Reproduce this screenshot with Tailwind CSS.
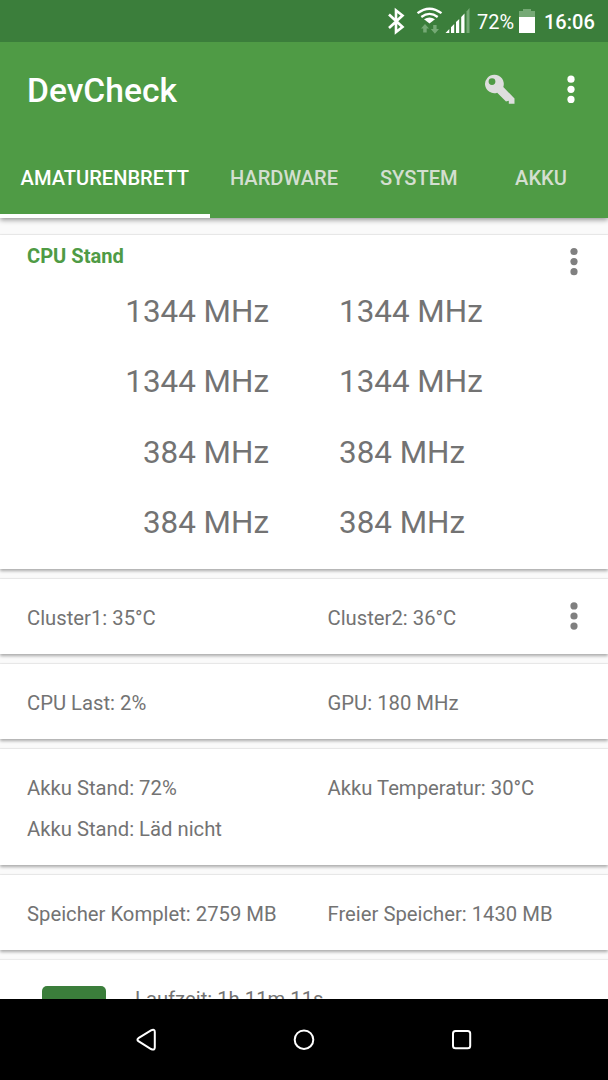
<!DOCTYPE html>
<html lang="de">
<head>
<meta charset="utf-8">
<title>DevCheck</title>
<script src="https://cdn.jsdelivr.net/npm/@tailwindcss/browser@4"></script>
</head>
<body class="w-[608px] h-[1080px] overflow-hidden flex flex-col bg-[#fafafa] font-['Roboto',sans-serif] text-[#737373]">
<header class="relative z-10 shrink-0 bg-[#4f9b45] text-white shadow-[0_2px_5px_rgba(0,0,0,0.4)]">
  <div class="h-[42px] bg-[#3b7e3b] flex items-center relative">
    <svg class="w-[150px] h-[42px] ml-[386px]" viewBox="386 0 150 42">
      <path d="M389 14.500L402.500 27L396 32V10.500L402.500 15.500L389 28" fill="none" stroke="#fff" stroke-width="2.600"/>
      <path d="M417.500 13.200Q429.500 4.200 441.500 13.200M421.300 17Q429.500 10.800 437.700 17" fill="none" stroke="#fff" stroke-width="2.300"/>
      <path d="M424 19.300Q429.500 15.800 435 19.300L429.500 23.500Z" fill="#fff"/>
      <path d="M425 24L429 28.500H426.700V32.500H423.200V28.500H421ZM433.200 25H436.600V29H439L434.900 33.800L430.800 29H433.200Z" fill="#75a975"/>
      <path d="M445.500 33L449.300 29V33ZM451 27.300L454.200 24V33H451ZM456 22L459.200 19V33H456ZM461.200 17L464.500 13.500V33H461.200Z" fill="#fff"/>
      <path d="M466.500 11.500L469.500 8V33H466.500Z" fill="#75a975"/>
      <path d="M519 11H523V9H531V11H535V17H519Z" fill="#75a975"/><path d="M519 17H535V33H519Z" fill="#fff"/>
      <text x="477" y="29.200" font-size="20.300" textLength="37" lengthAdjust="spacingAndGlyphs" fill="#fff">72%</text>
    </svg>
    <span class="ml-[8px] mt-[2px] text-[20px] leading-6 font-medium">16:06</span>
  </div>
  <div class="h-[96px] flex items-center pl-[27px] pr-[20px]">
    <h1 class="flex-1 pt-[2px] text-[33.600px] leading-[40px] font-medium">DevCheck</h1>
    <svg class="w-[32px] h-[32px] mt-[-2px] mr-[48px]" viewBox="484 73 32 32"><path fill-rule="evenodd" d="M494.500 74.800A9.200 9.200 0 1 0 497.200 92.700L506 101.500L508.800 100.700V103.700H514.500V98.500L503.300 87A9.200 9.200 0 0 0 494.500 74.800ZM492 78.200A3.400 3.400 0 1 1 492 85A3.400 3.400 0 0 1 492 78.200Z" fill="#dedede"/></svg>
    <svg class="w-[14px] h-[32px] mt-[-2px] mr-[10px]" viewBox="564 73 14 32" fill="#fff"><circle cx="571" cy="79.200" r="3.600"/><circle cx="571" cy="89.300" r="3.600"/><circle cx="571" cy="99.400" r="3.600"/></svg>
  </div>
  <nav class="h-[80px] grid grid-cols-[209.500px_149px_120.500px_124px] text-center text-[20.100px] leading-[81px] font-medium text-[#d3dfd0]">
    <div class="h-[80px] text-white shadow-[inset_0_-4px_0_#fff]">AMATURENBRETT</div>
    <div>HARDWARE</div><div>SYSTEM</div><div>AKKU</div>
  </nav>
</header>
<main class="flex-1 min-h-0 overflow-hidden pt-[17px] flex flex-col gap-[10px] text-[20.250px] leading-[24px]">
  <section class="h-[334px] shrink-0 bg-white shadow-[0_2px_3px_rgba(0,0,0,0.32),0_-1px_1px_rgba(0,0,0,0.06)]">
    <div class="flex justify-between pl-[27px] pr-[27px] pt-[10px]">
      <h2 class="mt-[-1px] font-bold text-[#4f9b45] text-[20.100px]">CPU Stand</h2>
      <svg class="w-[14px] h-[32px] mt-px" viewBox="0 0 14 32" fill="#808080"><circle cx="7" cy="5.500" r="3.600"/><circle cx="7" cy="15.600" r="3.600"/><circle cx="7" cy="25.700" r="3.600"/></svg>
    </div>
    <div class="mt-[-1px] grid grid-cols-[269px_1fr] gap-x-[70px] auto-rows-[70.400px] text-[31.400px] leading-[70px]">
      <div class="text-right">1344 MHz</div><div>1344 MHz</div>
      <div class="text-right">1344 MHz</div><div>1344 MHz</div>
      <div class="text-right">384 MHz</div><div>384 MHz</div>
      <div class="text-right">384 MHz</div><div>384 MHz</div>
    </div>
  </section>
  <section class="h-[75px] shrink-0 bg-white shadow-[0_2px_3px_rgba(0,0,0,0.32),0_-1px_1px_rgba(0,0,0,0.06)] flex items-center pl-[27px] pr-[27px] pt-[3px]">
    <span class="w-[300.500px]">Cluster1: 35°C</span><span class="flex-1">Cluster2: 36°C</span>
    <svg class="w-[14px] h-[32px] mt-[-4px]" viewBox="0 0 14 32" fill="#808080"><circle cx="7" cy="5.900" r="3.600"/><circle cx="7" cy="16" r="3.600"/><circle cx="7" cy="26.100" r="3.600"/></svg>
  </section>
  <section class="h-[75px] shrink-0 bg-white shadow-[0_2px_3px_rgba(0,0,0,0.32),0_-1px_1px_rgba(0,0,0,0.06)] flex items-center pl-[27px] pt-[3px]">
    <span class="w-[300.500px]">CPU Last: 2%</span><span>GPU: 180 MHz</span>
  </section>
  <section class="h-[116px] shrink-0 bg-white shadow-[0_2px_3px_rgba(0,0,0,0.32),0_-1px_1px_rgba(0,0,0,0.06)] grid grid-cols-[300.500px_1fr] auto-rows-[24px] gap-y-[17px] pl-[27px] pt-[27px]">
    <span>Akku Stand: 72%</span><span>Akku Temperatur: 30°C</span>
    <span>Akku Stand: Läd nicht</span>
  </section>
  <section class="h-[75px] shrink-0 bg-white shadow-[0_2px_3px_rgba(0,0,0,0.32),0_-1px_1px_rgba(0,0,0,0.06)] flex items-center pl-[27px] pt-[3px]">
    <span class="w-[300.500px]">Speicher Komplet: 2759 MB</span><span>Freier Speicher: 1430 MB</span>
  </section>
  <section class="h-[100px] shrink-0 bg-white shadow-[0_-1px_1px_rgba(0,0,0,0.06)] flex items-start pl-[42px] pt-[26px]">
    <div class="w-[64px] h-[60px] rounded-[5px] bg-[#3b7e3b]"></div><span class="ml-[29px] mt-px">Laufzeit: 1h 11m 11s</span>
  </section>
</main>
<footer class="relative z-10 h-[81px] shrink-0 bg-black flex items-center justify-center gap-[126px]">
  <svg class="w-[32px] h-[32px]" viewBox="130 1024 32 32" fill="none" stroke="#fff" stroke-width="2"><path d="M138.400 1038.200L151 1030.300Q154.800 1028.500 154.800 1032V1047.500Q154.800 1050.700 151 1049L138.400 1041.200Q136.500 1039.700 138.400 1038.200Z"/></svg>
  <svg class="w-[32px] h-[32px]" viewBox="288 1024 32 32" fill="none" stroke="#fff" stroke-width="2"><circle cx="304" cy="1039.700" r="9.300"/></svg>
  <svg class="w-[32px] h-[32px]" viewBox="446 1024 32 32" fill="none" stroke="#fff" stroke-width="2"><rect x="453" y="1031" width="17.200" height="17.200" rx="2.500"/></svg>
</footer>
</body>
</html>
